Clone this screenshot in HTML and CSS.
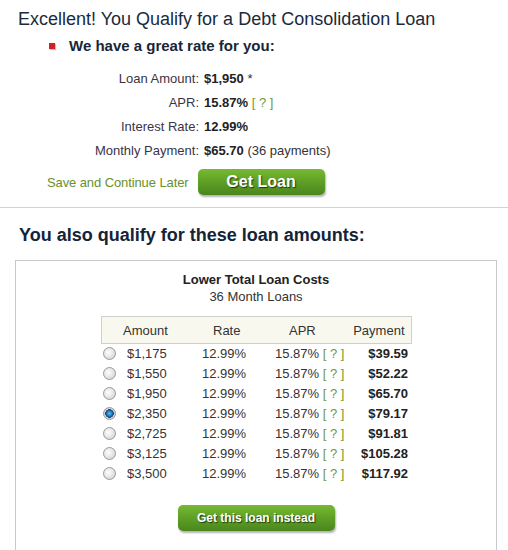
FILE: index.html
```html
<!DOCTYPE html>
<html lang="en">
<head>
<meta charset="utf-8">
<title>Debt Consolidation Loan</title>
<link rel="stylesheet" href="styles.css">
</head>
<body>
<header class="result">
  <h1 class="title">Excellent! You Qualify for a Debt Consolidation Loan</h1>
  <p class="lead"><span class="bullet"></span>We have a great rate for you:</p>
  <dl class="details">
    <dt>Loan Amount:</dt><dd><b>$1,950</b> *</dd>
    <dt>APR:</dt><dd><b>15.87%</b> <a class="help">[ ? ]</a></dd>
    <dt>Interest Rate:</dt><dd><b>12.99%</b></dd>
    <dt>Monthly Payment:</dt><dd><b>$65.70</b> (36 payments)</dd>
  </dl>
  <div class="actions">
    <a class="save">Save and Continue Later</a>
    <button class="btn btn-lg" type="button">Get Loan</button>
  </div>
</header>
<section class="options">
  <h2 class="options-title">You also qualify for these loan amounts:</h2>
  <div class="box">
    <p class="box-title"><strong>Lower Total Loan Costs</strong><br>36 Month Loans</p>
    <table class="loans">
      <colgroup>
        <col class="c-radio"><col class="c-amount"><col class="c-rate"><col class="c-apr"><col class="c-pay">
      </colgroup>
      <thead>
        <tr><th></th><th class="h-amount">Amount</th><th class="h-rate">Rate</th><th class="h-apr">APR</th><th class="h-pay">Payment</th></tr>
      </thead>
      <tbody>
        <tr><td class="d-radio"><input type="radio" name="loan"></td><td class="d-amount">$1,175</td><td class="d-rate">12.99%</td><td class="d-apr">15.87% <a class="help">[ ? ]</a></td><td class="d-pay">$39.59</td></tr>
        <tr><td class="d-radio"><input type="radio" name="loan"></td><td class="d-amount">$1,550</td><td class="d-rate">12.99%</td><td class="d-apr">15.87% <a class="help">[ ? ]</a></td><td class="d-pay">$52.22</td></tr>
        <tr><td class="d-radio"><input type="radio" name="loan"></td><td class="d-amount">$1,950</td><td class="d-rate">12.99%</td><td class="d-apr">15.87% <a class="help">[ ? ]</a></td><td class="d-pay">$65.70</td></tr>
        <tr><td class="d-radio"><input type="radio" name="loan" checked></td><td class="d-amount">$2,350</td><td class="d-rate">12.99%</td><td class="d-apr">15.87% <a class="help">[ ? ]</a></td><td class="d-pay">$79.17</td></tr>
        <tr><td class="d-radio"><input type="radio" name="loan"></td><td class="d-amount">$2,725</td><td class="d-rate">12.99%</td><td class="d-apr">15.87% <a class="help">[ ? ]</a></td><td class="d-pay">$91.81</td></tr>
        <tr><td class="d-radio"><input type="radio" name="loan"></td><td class="d-amount">$3,125</td><td class="d-rate">12.99%</td><td class="d-apr">15.87% <a class="help">[ ? ]</a></td><td class="d-pay">$105.28</td></tr>
        <tr><td class="d-radio"><input type="radio" name="loan"></td><td class="d-amount">$3,500</td><td class="d-rate">12.99%</td><td class="d-apr">15.87% <a class="help">[ ? ]</a></td><td class="d-pay">$117.92</td></tr>
      </tbody>
    </table>
    <div class="box-actions">
      <button class="btn btn-sm" type="button">Get this loan instead</button>
    </div>
  </div>
</section>
</body>
</html>
```
FILE: styles.css
```css
* { box-sizing: border-box; }

body {
  margin: 0;
  background: #fff;
  font-family: "Liberation Sans", Arial, sans-serif;
  font-size: 13px;
  color: #333;
}

.result {
  padding: 8px 0 12px;
  border-bottom: 1px solid #d3d3d3;
}

.title {
  margin: 0 0 0 18px;
  font-size: 18px;
  line-height: 22px;
  font-weight: normal;
  color: #1a2a3c;
}

.lead {
  margin: 8px 0 0;
  padding-left: 49px;
  display: flex;
  align-items: center;
  gap: 14px;
  font-size: 15px;
  line-height: 16px;
  font-weight: bold;
  color: #172638;
}

.bullet {
  width: 6px;
  height: 6px;
  background: #cc2229;
  box-shadow: 1px 1px 1px rgba(0,0,0,0.25);
}

.details {
  margin: 13px 0 0;
  display: grid;
  grid-template-columns: 199px auto;
  column-gap: 5px;
  line-height: 24px;
}

.details dt {
  text-align: right;
  color: #3a3448;
}

.details dd {
  margin: 0;
  color: #333;
}

.details b { color: #222; }

.help {
  color: #6f9a2e;
}

.actions {
  margin-top: 6px;
  padding-left: 47px;
  display: flex;
  align-items: center;
  gap: 9px;
}

.save {
  color: #6b8f2b;
  font-size: 13px;
  letter-spacing: -0.1px;
}

.btn {
  border: 0;
  border-radius: 5px;
  background: linear-gradient(#77b934, #5f9f26 50%, #4a861c);
  color: #fff;
  font-family: "Liberation Sans", Arial, sans-serif;
  font-weight: bold;
  text-shadow: 1px 1px 1px #1f3a0a;
  box-shadow: 1px 2px 2px rgba(0,0,0,0.3);
  padding: 0;
}

.btn-lg {
  width: 127px;
  height: 26px;
  font-size: 16px;
}

.options-title {
  margin: 16px 0 0 19px;
  font-size: 18px;
  line-height: 22px;
  color: #132438;
}

.box {
  margin: 14px 0 0 15px;
  width: 482px;
  border: 1px solid #c9c9c9;
  padding-bottom: 30px;
}

.box-title {
  margin: 0;
  padding-top: 10px;
  text-align: center;
  line-height: 17px;
  color: #333;
}

.box-title strong { color: #222; }

.loans {
  margin: 11px auto 0;
  width: 310px;
  table-layout: fixed;
  border-collapse: collapse;
}

.c-radio { width: 22px; }
.c-amount { width: 72px; }
.c-rate { width: 75px; }
.c-apr { width: 80px; }
.c-pay { width: 61px; }

.loans thead tr {
  border: 1px solid #cfcfcf;
  background: #f8f8ee;
}

.loans th {
  height: 27px;
  padding: 0;
  font-weight: normal;
  text-align: left;
  color: #333;
}

.h-amount { padding-left: 0; }
.loans .h-rate { padding-left: 18px; }
.loans .h-apr { padding-left: 19px; }
.loans .h-pay { text-align: right; padding-right: 6px; }

.loans td {
  height: 20px;
  padding: 0;
  white-space: nowrap;
  color: #333;
}

.loans .d-radio { padding-left: 2px; line-height: 0; }
.loans .d-amount { padding-left: 4px; }
.loans .d-rate { padding-left: 7px; }
.loans .d-apr { padding-left: 5px; }
.loans .d-pay { text-align: right; padding-right: 3px; font-weight: bold; color: #222; }

.loans input[type="radio"] {
  appearance: none;
  -webkit-appearance: none;
  margin: 0;
  width: 13px;
  height: 13px;
  border-radius: 50%;
  border: 1px solid #9a9b9b;
  background: radial-gradient(circle at 40% 40%, #fdfdfd 0%, #e8e8e8 45%, #cacaca 100%);
  vertical-align: middle;
}

.loans input[type="radio"]:checked {
  background: radial-gradient(circle, #5cc0f0 0%, #1a6fb3 38%, #0d3f70 52%, #d8d8d8 58%, #c0c0c0 100%);
}

.box-actions {
  margin-top: 21px;
  display: flex;
  justify-content: center;
}

.btn-sm {
  width: 157px;
  height: 26px;
  font-size: 12px;
}
```
